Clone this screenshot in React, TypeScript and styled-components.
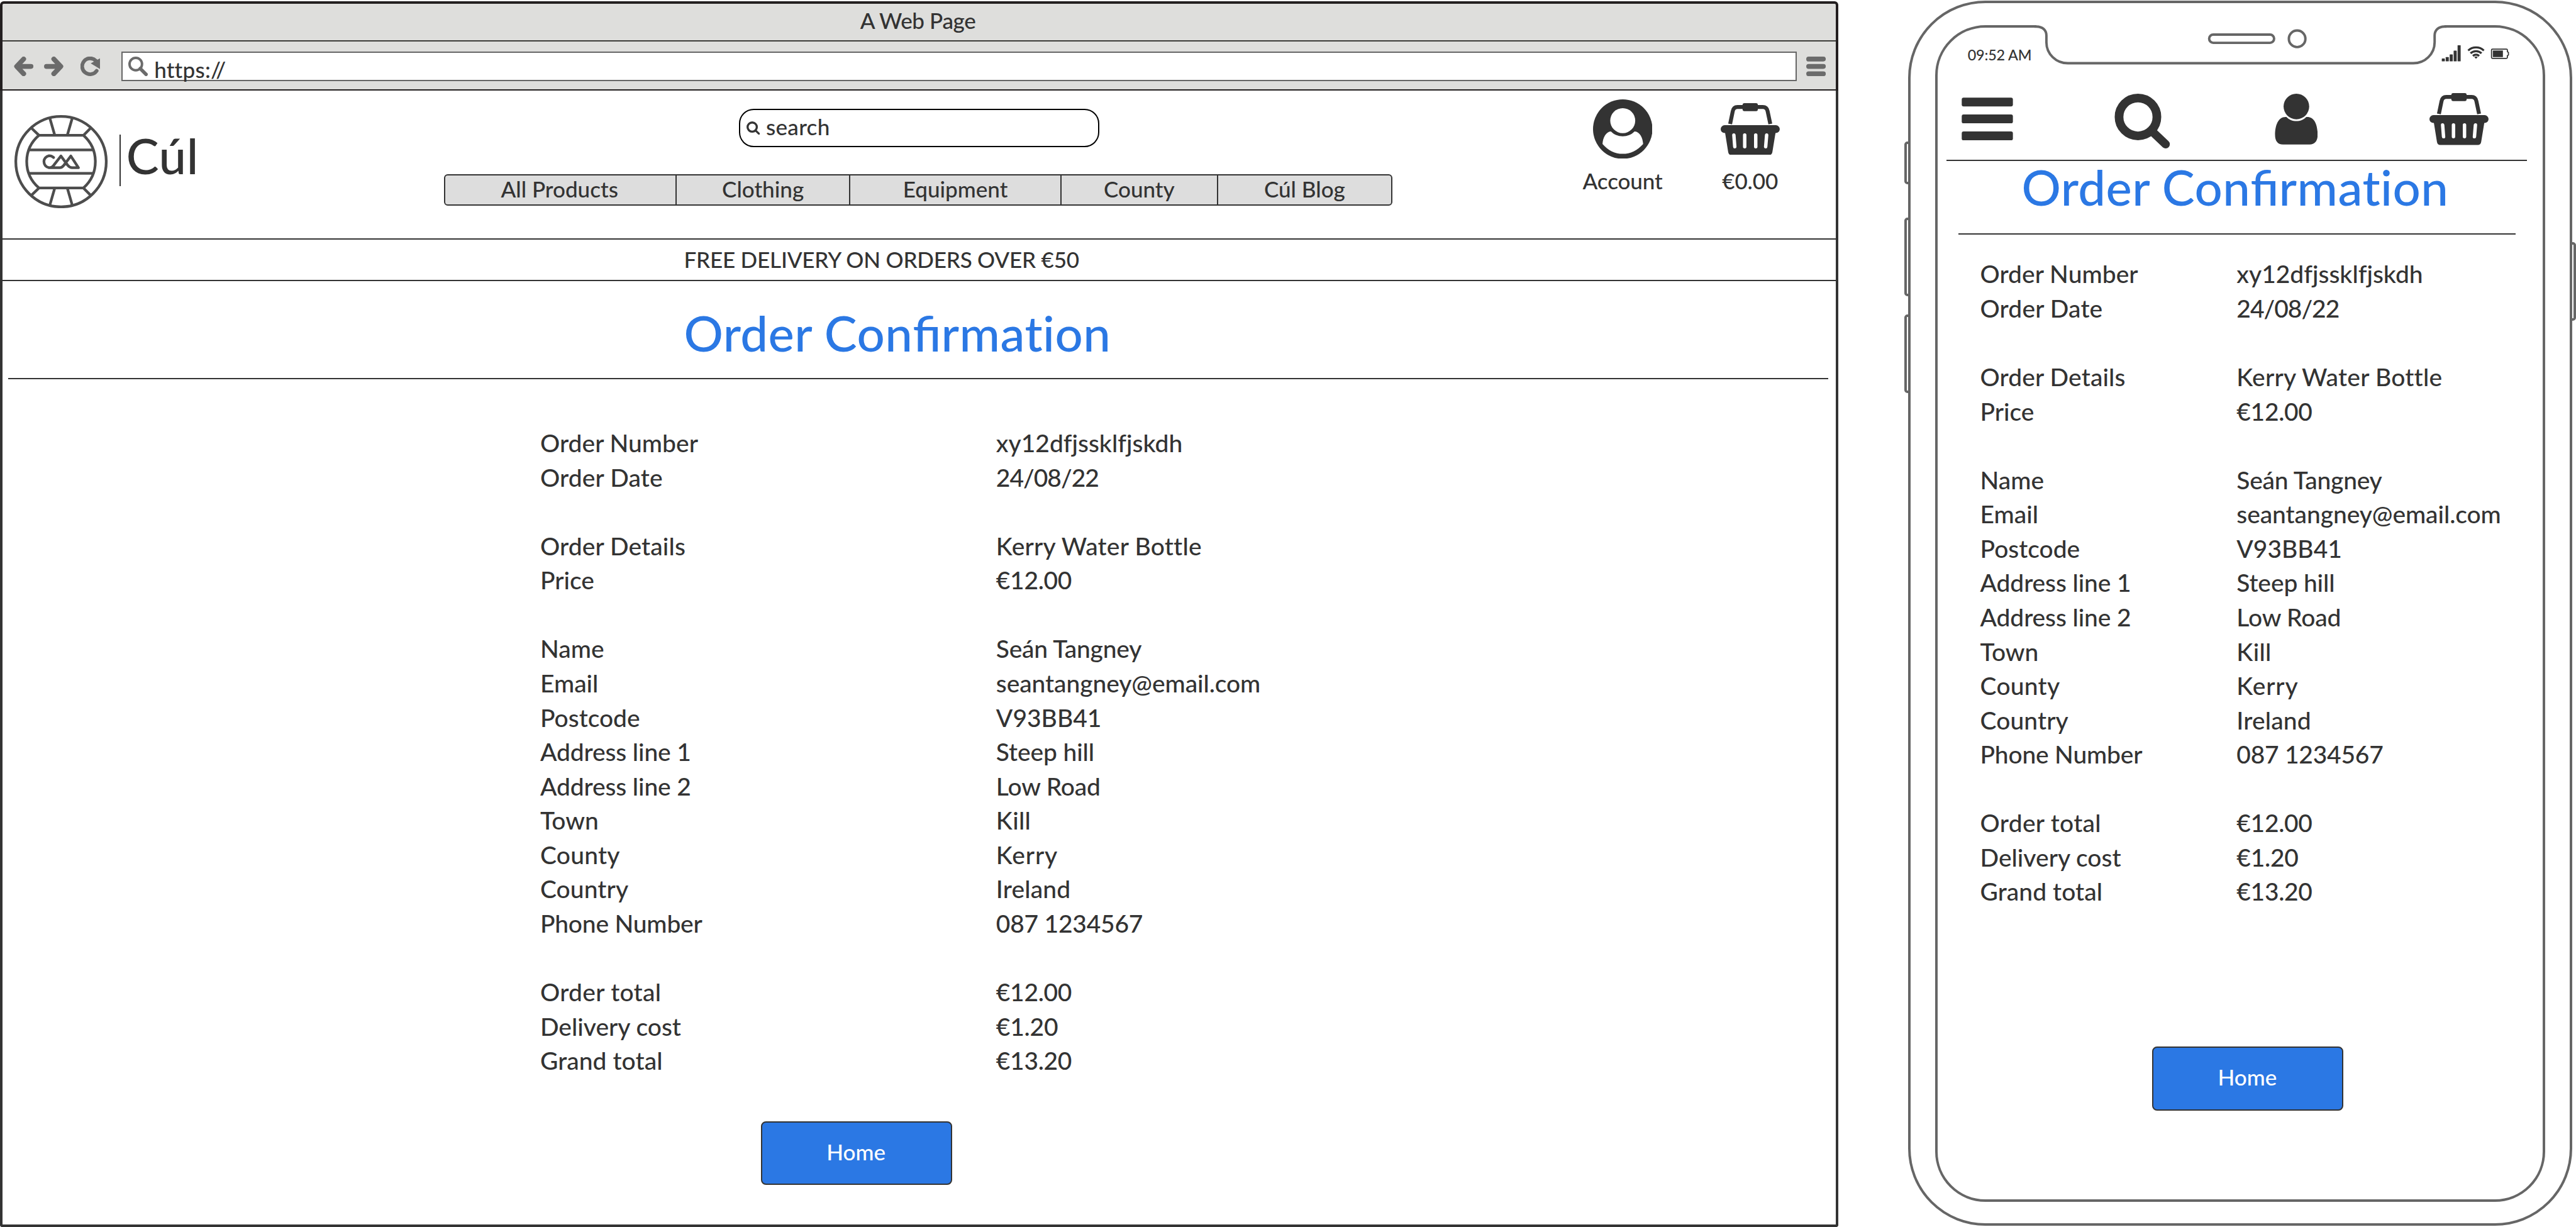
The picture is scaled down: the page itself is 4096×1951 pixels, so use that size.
import React from "react";
import styled, { createGlobalStyle } from "styled-components";

/* 1rem is ten drawing units; the board is 420.4rem wide and fills the window. */
const GlobalStyle = createGlobalStyle`
  *, *::before, *::after { box-sizing: border-box; }
  html { font-size: calc(100vw / 420.4); overflow: hidden; }
  body {
    margin: 0;
    background: #fff;
    color: #333;
    font-family: Lato, "Open Sans", sans-serif;
    font-weight: 500;
    font-variant-ligatures: none;
  }
  svg { display: block; flex: none; }
`;

const INK = "#333333";
const BLUE = "#2b78e4";
const METAL = "#666666";
const GLYPH = "#6b6b6b";

const Board = styled.div`
  display: flex;
  align-items: flex-start;
  width: 420.4rem;
  height: 200.2rem;
  overflow: hidden;
`;

/* ---------- desktop window ---------- */

const Browser = styled.section`
  display: flex;
  flex-direction: column;
  width: 300rem;
  height: 200rem;
  margin-top: 0.2rem;
`;

const Chrome = styled.header`
  display: flex;
  flex-direction: column;
  height: 14.6rem;
  border: 4px solid #231f20;
  border-bottom-width: 2px;
  border-radius: 0.6rem 0.6rem 0 0;
  background: #dededc;
`;

const TitleBar = styled.div`
  display: flex;
  align-items: center;
  justify-content: center;
  height: 6.2rem;
  padding: 0 0.4rem 0.7rem 0;
  border-bottom: 2px solid #3c3b38;
  font-size: 3.6rem;
  letter-spacing: -0.011em;
  line-height: 1.2;
`;

const Toolbar = styled.div`
  display: flex;
  flex: 1;
  align-items: center;
  padding: 0.2rem 1.6rem 0 1.8rem;
`;

const NavGlyphs = styled.div`
  display: flex;
  gap: 1.8rem;
  margin-right: 2.7rem;
`;

const AddressBar = styled.div`
  display: flex;
  flex: 1;
  align-items: center;
  height: 4.8rem;
  margin: 0 1.6rem 0 3.5rem;
  padding-left: 0.9rem;
  border: 2px solid ${METAL};
  background: #fff;
`;

const Address = styled.span`
  margin: 0.96rem 0 0 1.05rem;
  font-size: 3.6rem;
  letter-spacing: 0.006em;
  line-height: 1.2;
`;

const Viewport = styled.main`
  flex: 1;
  border: 4px solid ${INK};
  border-top: 0;
  border-radius: 0 0 0.4rem 0.4rem;
  background: #fff;
`;

const SiteHeader = styled.div`
  display: grid;
  grid-template-columns: 72rem 154.8rem 1fr;
  height: 24.3rem;
  border-bottom: 2px solid ${INK};
`;

const Brand = styled.div`
  display: flex;
  align-items: flex-start;
  padding-left: 2rem;

  & > svg { margin-top: 4rem; }
`;

const BrandRule = styled.i`
  width: 2px;
  height: 8.4rem;
  margin: 7.2rem 0 0 1.9rem;
  background: ${INK};
`;

const BrandName = styled.span`
  margin: 5.8rem 0 0 0.88rem;
  font-size: 8rem;
  letter-spacing: 0.008em;
  line-height: 1.2;
`;

const HeaderCenter = styled.div`
  display: flex;
  flex-direction: column;
  gap: 4.4rem;
  padding-top: 3rem;
`;

const SearchField = styled.div`
  display: flex;
  align-items: center;
  gap: 1rem;
  width: 58.8rem;
  height: 6.2rem;
  margin-left: 48.2rem;
  padding-left: 1rem;
  border: 2px solid #000;
  border-radius: 2.4rem;
  font-size: 3.6rem;
  letter-spacing: 0.008em;
  line-height: 1.2;
`;

const SearchText = styled.span`
  padding-bottom: 0.55rem;
`;

const Menu = styled.nav`
  display: grid;
  grid-template-columns: 37.6fr 28.4fr 34.4fr 25.6fr 28.4fr;
  height: 5.2rem;
  border: 2px solid ${INK};
  border-radius: 0.6rem;
  background: #ddd;
  overflow: hidden;
`;

const MenuItem = styled.a`
  display: flex;
  align-items: center;
  justify-content: center;
  padding-bottom: 0.9rem;
  font-size: 3.6rem;
  line-height: 1.2;

  &:first-child { padding-right: 0.2rem; }
  & + & { border-left: 2px solid ${INK}; }
`;

const Actions = styled.div`
  display: flex;
  gap: 4.8rem;
  padding: 1.4rem 0 0 29.6rem;
`;

const Action = styled.div`
  display: flex;
  flex-direction: column;
  align-items: center;
  gap: 1.45rem;
  width: 16rem;
  font-size: 3.6rem;
  letter-spacing: -0.004em;
  line-height: 1.2;
`;

const ActionIcon = styled.div`
  display: flex;
  align-items: center;
  height: 9.7rem;
`;

const Banner = styled.div`
  display: flex;
  align-items: center;
  height: 6.8rem;
  padding: 0 0 0.24rem 111.2rem;
  border-bottom: 2px solid ${INK};
  font-size: 3.6rem;
  letter-spacing: -0.0062em;
  line-height: 1.2;
`;

const TitleRow = styled.div<{ $compact?: boolean }>`
  height: ${(p) => (p.$compact ? "12rem" : "16rem")};
  margin: ${(p) => (p.$compact ? "0 4.37rem 0 3.36rem" : "0 1.2rem 0 0.9rem")};
  padding: ${(p) => (p.$compact ? "0.3rem 0 0 10.3rem" : "4.5rem 0 0 110.3rem")};
  border-bottom: 2px solid ${INK};
`;

const Title = styled.h1`
  margin: 0;
  color: ${BLUE};
  font-size: 8rem;
  font-weight: 500;
  letter-spacing: 0.006em;
  line-height: 1;
  white-space: nowrap;
`;

/* Only the "fi" pair is joined in the heading. */
const Joined = styled.span`
  font-variant-ligatures: common-ligatures;
  letter-spacing: 0;
`;

/* ---------- order summary, shared by both screens ---------- */

const Summary = styled.div<{ $compact?: boolean }>`
  display: flex;
  flex-direction: column;
  gap: 5.6rem;
  padding: ${(p) => (p.$compact ? "3.6rem 0 0 6.9rem" : "7.6rem 0 0 87.75rem")};
  font-size: 4rem;
  line-height: 5.6rem;
`;

const Group = styled.dl<{ $compact?: boolean }>`
  display: grid;
  grid-template-columns: ${(p) => (p.$compact ? "41.85rem" : "74.4rem")} 1fr;
  margin: 0;
  white-space: nowrap;
`;

const Term = styled.dt<{ $track: number }>`
  letter-spacing: ${(p) => p.$track}em;
`;
const Value = styled.dd<{ $track: number }>`
  margin: 0;
  letter-spacing: ${(p) => p.$track}em;
`;

const HomeButton = styled.button<{ $compact?: boolean }>`
  display: flex;
  align-items: center;
  justify-content: center;
  width: 31.2rem;
  height: 10.4rem;
  margin: ${(p) => (p.$compact ? "22.5rem 0 0 35rem" : "7.1rem 0 0 123.8rem")};
  padding: 0 0.2rem 0.6rem 0;
  border: 2px solid ${INK};
  border-radius: 0.8rem;
  background: ${BLUE};
  color: #fff;
  font: 500 3.6rem / 1.2 Lato, "Open Sans", sans-serif;
`;

/* ---------- phone ---------- */

const Phone = styled.section`
  position: relative;
  width: 108.4rem;
  height: 199.97rem;
  margin: 0.1rem 0 0 11.4rem;
  padding: 3.63rem 4.05rem 3.57rem 4.04rem;
  border: 4px solid ${METAL};
  border-radius: 12.6rem;
`;

const SideKey = styled.i<{ $side: "left" | "right"; $top: number; $length: number }>`
  position: absolute;
  top: ${(p) => p.$top}rem;
  ${(p) => p.$side}: -0.98rem;
  width: 1rem;
  height: ${(p) => p.$length}rem;
  border: 4px solid ${METAL};
  border-radius: ${(p) => (p.$side === "left" ? "0.5rem 0 0 0.5rem" : "0 0.5rem 0.5rem 0")};
`;

const NotchSlot = styled.div`
  position: absolute;
  top: 3.4rem;
  left: 20.2rem;
`;

const Screen = styled.div`
  height: 100%;
  border: 4px solid ${METAL};
  border-radius: 8.2rem;
`;

const StatusBar = styled.div`
  display: flex;
  justify-content: space-between;
  height: 7rem;
  padding: 2.77rem 5.37rem 0 4.86rem;
`;

const Clock = styled.span`
  padding-top: 0.2rem;
  font-size: 2.4rem;
  letter-spacing: -0.007em;
  line-height: 1.2;
`;

const StatusIcons = styled.div`
  display: flex;
  gap: 0.95rem;
`;

const PhoneTools = styled.div`
  display: grid;
  grid-template-columns: 24.9rem 26.2rem 25.3rem auto;
  align-items: start;
  height: 14.77rem;
  margin: 0 2.57rem 0 1.36rem;
  padding: 3.47rem 0 0 2.5rem;
  border-bottom: 2px solid ${INK};
`;

const BasketSlot = styled.div`
  padding-top: 0.18rem;
`;

/* ---------- drawings ---------- */

const Svg = styled.svg<{ $w: number; $h: number }>`
  width: ${(p) => p.$w}rem;
  height: ${(p) => p.$h}rem;
`;

const Drawing = ({ box, w, h, children }: { box: string; w: number; h: number; children: React.ReactNode }) => (
  <Svg viewBox={box} $w={w} $h={h} fill="none">
    {children}
  </Svg>
);

const ArrowIcon = ({ back }: { back?: boolean }) => (
  <Drawing box="0 0 32 32" w={3.2} h={3.2}>
    <path
      d={back ? "M28 16H5M16 4L4.6 16L16 28" : "M4 16H27M16 4L27.4 16L16 28"}
      stroke={GLYPH}
      strokeWidth="8"
      strokeLinecap="round"
      strokeLinejoin="round"
    />
  </Drawing>
);

const ReloadIcon = () => (
  <Drawing box="0 0 32 32" w={3.2} h={3.2}>
    <path d="M25 6.7A13 13 0 1 0 26.4 23.2" stroke={GLYPH} strokeWidth="6" strokeLinecap="round" />
    <path d="M32 2.8V20.4L16.7 11Z" fill={GLYPH} />
  </Drawing>
);

const LensIcon = () => (
  <Drawing box="0 0 32 32" w={3.2} h={3.2}>
    <circle cx="12.2" cy="12.2" r="10.2" stroke={GLYPH} strokeWidth="4" />
    <path d="M19.5 19.5L29 29" stroke={GLYPH} strokeWidth="5.6" strokeLinecap="round" />
  </Drawing>
);

const BarsIcon = () => (
  <Drawing box="0 0 32 32" w={3.2} h={3.2}>
    <path d="M4 4H28M4 16H28M4 28H28" stroke={GLYPH} strokeWidth="8" strokeLinecap="round" />
  </Drawing>
);

const SearchIcon = ({ size }: { size: number }) => (
  <Drawing box="0 0 90 90" w={size} h={size}>
    <circle cx="38" cy="38" r="30.9" stroke={INK} strokeWidth="14.2" />
    <path d="M60 60.5L83 82.6" stroke={INK} strokeWidth="13.6" strokeLinecap="round" />
  </Drawing>
);

const BallLogo = () => (
  <Drawing box="24 188 152 152" w={15.2} h={15.2}>
    <g stroke="#4d4d4d" strokeWidth="4.4" strokeLinejoin="round">
      <circle cx="100" cy="264" r="73.8" />
      <path d="M64 221H136.6C150 233 156 248 156 264S150 295 136.6 307H64C50 295 44 280 44 264S50 233 64 221Z" />
      <path d="M48 244.8H152M48 283H152" />
      <path d="M81.7 193L89.5 220M118.3 193L110.5 220M81.7 335L89.5 308M118.3 335L110.5 308" />
      <path d="M51.5 209L64 221M148.5 209L136.6 221M51.5 319L64 307M148.5 319L136.6 307" />
      <path
        strokeLinecap="round"
        d="M87.8 257.2C85.5 255 83 254.3 80.3 254.3A9.9 9.9 0 0 0 80.3 273.8H98C101 273.8 102.5 272.5 104.5 270L116 254.8L128.4 273.8H118C114.8 273.8 113.2 272.6 111 270L99.8 254.8L88 270C86.3 272.4 84.5 273.8 81 273.8"
      />
    </g>
  </Drawing>
);

const AccountIcon = () => (
  <Drawing box="0 0 97 97" w={9.7} h={9.7}>
    <circle cx="48.5" cy="48.5" r="48.5" fill={INK} />
    <circle cx="48.5" cy="34.7" r="20.4" fill="#fff" />
    <path
      d="M29.2 52.3C34.6 57.6 40.8 60.2 48.5 60.2S62.4 57.6 67.8 52.3C76.5 52.6 81.2 63 81.8 72.8C72.5 83.2 61 88.9 48.5 88.9S24.5 83.2 15.5 72.8C16 63 21 52.6 29.2 52.3Z"
      fill="#fff"
    />
  </Drawing>
);

const BasketIcon = () => (
  <Drawing box="0 0 96.4 85" w={9.64} h={8.5}>
    <path
      d="M15.4 33.9L19.7 13.2C20.7 8.6 23.3 6.4 27.5 6.4H68.7C73 6.4 75.6 8.6 76.6 13.2L81 33.9"
      stroke={INK}
      strokeWidth="6.4"
    />
    <rect x="35.7" y="0" width="25" height="13" rx="3" fill={INK} />
    <rect x="0" y="36" width="96.4" height="12.8" rx="6.4" fill={INK} />
    <path d="M6.8 46H89.9L84.4 79.6C83.9 83.2 82 84.7 79 84.7H17.6C14.6 84.7 12.7 83.2 12.2 79.6Z" fill={INK} />
    <path
      d="M21.5 52L23 71.2M39.2 52V71.2M57.2 52V71.2M75 52L73.4 71.2"
      stroke="#fff"
      strokeWidth="5.6"
      strokeLinecap="round"
    />
  </Drawing>
);

const PhoneMenuIcon = () => (
  <Drawing box="0 0 84 94" w={8.4} h={9.4}>
    {[9.4, 37, 64.7].map((y) => (
      <rect key={y} x="0.3" y={y} width="83.5" height="14.4" rx="3" fill={INK} />
    ))}
  </Drawing>
);

const PhoneSearchIcon = () => (
  <Drawing box="0 -3 92 94" w={9.2} h={9.4}>
    <circle cx="38.5" cy="38" r="30.9" stroke={INK} strokeWidth="14.2" />
    <path d="M60.5 60.5L83.7 82.6" stroke={INK} strokeWidth="13.6" strokeLinecap="round" />
  </Drawing>
);

const PhoneUserIcon = () => (
  <Drawing box="0 0 70 94" w={7} h={9.4}>
    <circle cx="35.3" cy="23.9" r="20.9" fill={INK} />
    <path
      d="M19 41C23.5 45.6 29 47.7 35.3 47.7S47 45.6 51.5 41C65 40 70 54 70 70.5C70 79.5 66 86 57 86H13.5C4.5 86 0.5 79.5 0.5 70.5C0.5 54 6 40 19 41Z"
      fill={INK}
    />
  </Drawing>
);

const SignalIcon = () => (
  <Drawing box="3985 73 32 28" w={3.2} h={2.8}>
    {[95.7, 93.3, 89, 82.7, 74].map((y, i) => (
      <rect key={y} x={3985.6 + 6.45 * i} y={y} width="5" height={100.3 - y} rx="0.6" fill={INK} />
    ))}
  </Drawing>
);

const WifiIcon = () => (
  <Drawing box="4026 73 29 28" w={2.9} h={2.8}>
    <g stroke={INK} strokeWidth="3.4">
      <path d="M4027.6 82.6C4034.8 75.9 4046 75.9 4053.2 82.6" />
      <path d="M4031.4 87.2C4036.6 82.4 4044.2 82.4 4049.4 87.2" />
      <path d="M4035.3 91.5C4038.4 88.7 4042.4 88.7 4045.5 91.5" />
    </g>
    <path d="M4037.7 93.3C4039.5 92 4041.3 92 4043.1 93.3L4040.4 96.2Z" fill={INK} />
  </Drawing>
);

const BatteryIcon = () => (
  <Drawing box="4065 73 31 28" w={3.1} h={2.8}>
    <path
      d="M4068.2 80.2H4091C4092 80.2 4092.6 80.8 4092.6 81.8V84.6L4094.3 85.6V90L4092.6 91V93.8C4092.6 94.8 4092 95.4 4091 95.4H4068.2C4067.2 95.4 4066.7 94.8 4066.7 93.8V81.8C4066.7 80.8 4067.2 80.2 4068.2 80.2Z"
      stroke={INK}
      strokeWidth="1.8"
    />
    <rect x="4068.9" y="82.5" width="16.4" height="10.8" fill={INK} />
  </Drawing>
);

const Notch = () => (
  <Drawing box="3320 39 672 68" w={67.2} h={6.8}>
    <rect x="3323" y="39" width="666" height="10" fill="#fff" />
    <path
      d="M3318 43.3H3323C3333.5 43.3 3339.4 49.5 3339.4 58V69C3339.4 88 3355 103.2 3374.6 103.2H3938C3957.5 103.2 3973 88 3973 69V58C3973 49.5 3979 43.3 3989 43.3H3994"
      fill="#fff"
      stroke={METAL}
      strokeWidth="4"
    />
    <rect x="3605" y="56.5" width="106" height="13.4" rx="6.7" stroke={METAL} strokeWidth="4" />
    <circle cx="3748.6" cy="63.3" r="13.5" stroke={METAL} strokeWidth="4" />
  </Drawing>
);

/* ---------- data ---------- */

const MENU = ["All Products", "Clothing", "Equipment", "County", "Cúl Blog"];

type Line = { term: string; value: string; termTrack?: number; valueTrack?: number };

const ORDER: Line[][] = [
  [
    { term: "Order Number", value: "xy12dfjssklfjskdh", termTrack: 0.001 },
    { term: "Order Date", value: "24/08/22", termTrack: 0.004, valueTrack: -0.026 },
  ],
  [
    { term: "Order Details", value: "Kerry Water Bottle", termTrack: 0.003, valueTrack: 0.006 },
    { term: "Price", value: "€12.00", valueTrack: -0.008 },
  ],
  [
    { term: "Name", value: "Seán Tangney", valueTrack: -0.006 },
    { term: "Email", value: "seantangney@email.com", valueTrack: -0.002 },
    { term: "Postcode", value: "V93BB41" },
    { term: "Address line 1", value: "Steep hill", termTrack: -0.003, valueTrack: -0.003 },
    { term: "Address line 2", value: "Low Road", termTrack: -0.003, valueTrack: -0.004 },
    { term: "Town", value: "Kill", valueTrack: 0.008 },
    { term: "County", value: "Kerry", termTrack: 0.006, valueTrack: 0.022 },
    { term: "Country", value: "Ireland", termTrack: 0.002, valueTrack: 0.004 },
    { term: "Phone Number", value: "087 1234567", termTrack: -0.005, valueTrack: -0.006 },
  ],
  [
    { term: "Order total", value: "€12.00", termTrack: 0.008, valueTrack: -0.008 },
    { term: "Delivery cost", value: "€1.20", valueTrack: -0.006 },
    { term: "Grand total", value: "€13.20", termTrack: 0.002, valueTrack: -0.008 },
  ],
];

const Confirmation = ({ compact }: { compact?: boolean }) => (
  <>
    <TitleRow $compact={compact}>
      <Title>
        Order Con<Joined>fi</Joined>rmation
      </Title>
    </TitleRow>
    <Summary $compact={compact}>
      {ORDER.map((lines) => (
        <Group key={lines[0].term} $compact={compact}>
          {lines.map(({ term, value, termTrack = 0, valueTrack = 0 }) => (
            <React.Fragment key={term}>
              <Term $track={termTrack}>{term}</Term>
              <Value $track={valueTrack}>{value}</Value>
            </React.Fragment>
          ))}
        </Group>
      ))}
    </Summary>
    <HomeButton $compact={compact}>Home</HomeButton>
  </>
);

export default function App() {
  return (
    <>
      <GlobalStyle />
      <Board>
        <Browser>
          <Chrome>
            <TitleBar>A Web Page</TitleBar>
            <Toolbar>
              <NavGlyphs>
                <ArrowIcon back />
                <ArrowIcon />
              </NavGlyphs>
              <ReloadIcon />
              <AddressBar>
                <LensIcon />
                <Address>https://</Address>
              </AddressBar>
              <BarsIcon />
            </Toolbar>
          </Chrome>
          <Viewport>
            <SiteHeader>
              <Brand>
                <BallLogo />
                <BrandRule />
                <BrandName>Cúl</BrandName>
              </Brand>
              <HeaderCenter>
                <SearchField>
                  <SearchIcon size={2.2} />
                  <SearchText>search</SearchText>
                </SearchField>
                <Menu>
                  {MENU.map((label) => (
                    <MenuItem key={label}>{label}</MenuItem>
                  ))}
                </Menu>
              </HeaderCenter>
              <Actions>
                <Action>
                  <ActionIcon>
                    <AccountIcon />
                  </ActionIcon>
                  Account
                </Action>
                <Action>
                  <ActionIcon>
                    <BasketIcon />
                  </ActionIcon>
                  €0.00
                </Action>
              </Actions>
            </SiteHeader>
            <Banner>FREE DELIVERY ON ORDERS OVER €50</Banner>
            <Confirmation />
          </Viewport>
        </Browser>

        <Phone>
          <SideKey $side="left" $top={22.6} $length={7} />
          <SideKey $side="left" $top={35} $length={12.8} />
          <SideKey $side="left" $top={50.8} $length={12.8} />
          <SideKey $side="right" $top={39} $length={12.8} />
          <Screen>
            <StatusBar>
              <Clock>09:52 AM</Clock>
              <StatusIcons>
                <SignalIcon />
                <WifiIcon />
                <BatteryIcon />
              </StatusIcons>
            </StatusBar>
            <PhoneTools>
              <PhoneMenuIcon />
              <PhoneSearchIcon />
              <PhoneUserIcon />
              <BasketSlot>
                <BasketIcon />
              </BasketSlot>
            </PhoneTools>
            <Confirmation compact />
          </Screen>
          <NotchSlot>
            <Notch />
          </NotchSlot>
        </Phone>
      </Board>
    </>
  );
}
